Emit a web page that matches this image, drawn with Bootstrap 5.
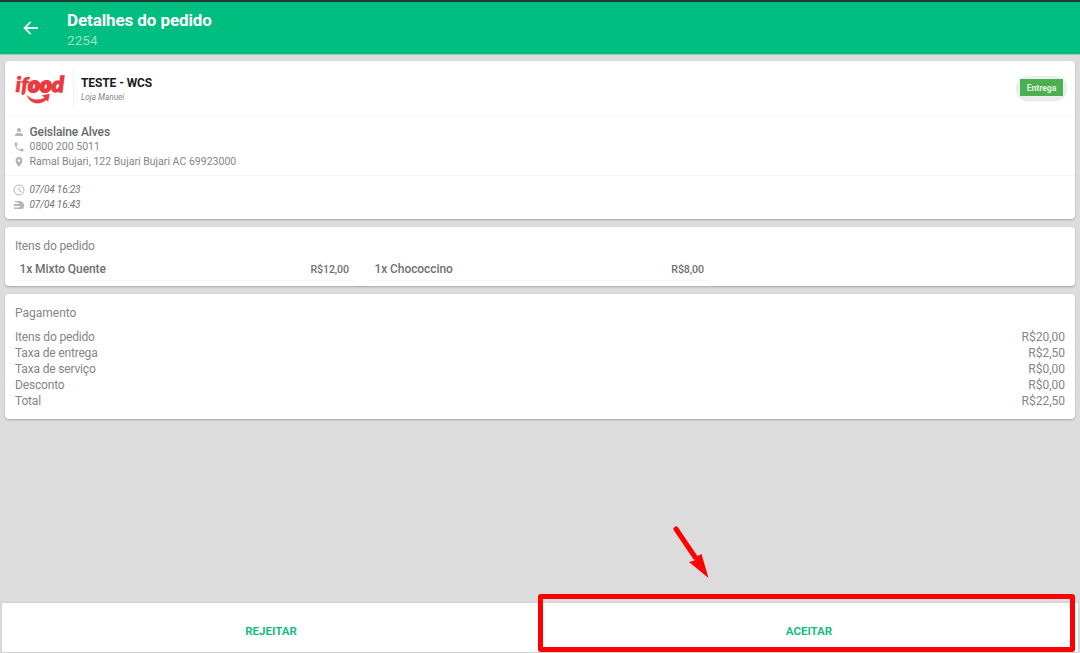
<!DOCTYPE html>
<html lang="pt-BR">
<head>
<meta charset="utf-8">
<meta name="viewport" content="width=device-width, initial-scale=1">
<title>Detalhes do pedido</title>
<link href="https://cdn.jsdelivr.net/npm/bootstrap@5.3.0/dist/css/bootstrap.min.css" rel="stylesheet">
<style>
  body { font-family: Roboto, "Liberation Sans", sans-serif; font-size: 12px; line-height: 16px; color: #858585; background: #dcdcdc; height: 653px; overflow: hidden; }
  .app-bar { height: 55px; background: #00bd80; border-top: 2px solid #1f3b33; border-bottom: 1px solid #8fcdb5; padding-left: 21px; }
  .app-title { font-size: 17px; line-height: 20px; font-weight: 700; color: #fff; margin: 8px 0 0; letter-spacing: -.1px; }
  .app-sub { font-size: 13.5px; line-height: 17px; color: #98e3c9; letter-spacing: .1px; margin-top: 2px; }
  .back { width: 18px; height: 18px; margin: 17px 28px 0 0; }
  .panel { --bs-card-border-radius: 4px; --bs-card-border-width: 0; box-shadow: 0 1px 2px rgba(0,0,0,.25); color: inherit; }
  .order { height: 157.5px; }
  .items { height: 58.5px; padding: 11px 10px 0; }
  .payment { height: 124.5px; padding: 11px 10px 0; }
  .stack { padding: 6px 5px 0; gap: 8.5px; }
  .store { height: 55px; padding: 7px 8px 0 10px; border-bottom: 1px solid #f5f5f5; }
  .logo { width: 50px; height: 40px; }
  .store-name { font-size: 12px; line-height: 14px; font-weight: 700; color: #1b1b1b; letter-spacing: -.1px; }
  .store-text { border-left: 1px solid #f3f3f3; height: 41px; margin-left: 8px; padding: 8px 0 0 7px; }
  .store-sub { font-size: 8.2px; line-height: 15px; font-style: italic; color: #858585; }
  .halo { background: #eceeee; border-radius: 12px; padding: 3px 4px 4px; margin-top: 8px; box-shadow: 0 1px 1px #e3e3e3; }
  .tag { --bs-badge-font-size: 8.5px; --bs-badge-font-weight: 700; --bs-badge-border-radius: 0; width: 43px; height: 17px; line-height: 18px; padding: 0; background: #4caf50; color: #e4f5e4; display: block; }
  .client { height: 60px; padding: 9px 8px 0; border-bottom: 1px solid #f5f5f5; font-size: 10.55px; line-height: 14.6px; }
  .phone, .address { position: relative; top: .5px; }
  .times { padding: 7px 8px 0; font-size: 10px; line-height: 14.5px; font-style: italic; color: #747474; letter-spacing: -.15px; }
  .glyph { width: 12px; height: 12px; margin-right: 4.5px; flex: none; fill: #b5b5b5; }
  .client-name { font-size: 12px; font-weight: 500; color: #686868; letter-spacing: -.1px; }
  .item { width: 339px; height: 19px; margin-right: 16px; padding: 0 5px 0 4.5px; border-bottom: 1px solid #f4f4f4; font-weight: 500; color: #707070; letter-spacing: -.08px; line-height: 15px; }
  .entry { letter-spacing: -.17px; }
  .price { font-size: 10.6px; }
  .actions { height: 49px; margin: 0 2px 1px; box-shadow: 0 0 2px rgba(0,0,0,.12); }
  .action { --bs-btn-color: #14bd83; --bs-btn-bg: #fff; --bs-btn-border-radius: 0; --bs-btn-border-width: 0; --bs-btn-font-size: 11.5px; --bs-btn-font-weight: 700; --bs-btn-padding-y: 0; line-height: 16px; padding-top: 7px; }
  .focus-box { left: 538px; top: 594px; width: 537px; height: 58px; border: 5px solid #f00; border-radius: 3px; pointer-events: none; }
  .pointer { left: 670px; top: 523px; width: 42px; height: 58px; pointer-events: none; }
</style>
</head>
<body class="d-flex flex-column position-relative">
<header class="app-bar d-flex flex-shrink-0">
  <svg class="back" viewBox="0 0 18 18" fill="none" stroke="#e9fff7" stroke-width="1.8"><path d="M17 9H3.5M9.7 2.8 3.5 9l6.2 6.2"/></svg>
  <div><h1 class="app-title">Detalhes do pedido</h1><div class="app-sub">2254</div></div>
</header>
<main class="stack d-flex flex-column flex-grow-1">
  <section class="card panel order">
    <div class="store d-flex">
      <svg class="logo" viewBox="0 0 50 40">
        <text x=".5" y="23.5" font-family="Lato" font-weight="900" font-style="italic" font-size="20" fill="#ea3a40" stroke="#ea3a40" stroke-width=".6" textLength="48.5" lengthAdjust="spacingAndGlyphs">if<tspan stroke-width="2">oo</tspan><tspan stroke-width="1.3">d</tspan></text>
        <path d="M12 27.5C17 32.5 24 33 30 29.500L27 27.500 34.500 26 33 33.500 31.500 31.800C25 37.500 15 36 12 27.500z" fill="#ea3a40" stroke="#ea3a40" stroke-width=".4"/>
      </svg>
      <div class="store-text"><div class="store-name">TESTE - WCS</div><div class="store-sub">Loja Manuei</div></div>
      <div class="ms-auto align-self-start"><div class="halo"><span class="badge tag">Entrega</span></div></div>
    </div>
    <div class="client">
      <div class="d-flex align-items-center client-name"><svg class="glyph" viewBox="0 0 24 24"><path d="M12 12a4 4 0 1 0 0-8 4 4 0 0 0 0 8zm0 2c-2.700 0-8 1.300-8 4v2h16v-2c0-2.700-5.300-4-8-4z"/></svg>Geislaine Alves</div>
      <div class="d-flex align-items-center phone"><svg class="glyph" viewBox="0 0 24 24"><path d="M6.600 10.800c1.400 2.800 3.800 5.100 6.600 6.600l2.200-2.200c.3-.3.7-.4 1-.2 1.100.4 2.300.6 3.600.6.600 0 1 .4 1 1V20c0 .6-.4 1-1 1C10.600 21 3 13.400 3 4c0-.6.500-1 1-1h3.500c.6 0 1 .4 1 1 0 1.200.2 2.400.6 3.600.1.300 0 .7-.2 1z"/></svg>0800 200 5011</div>
      <div class="d-flex align-items-center address"><svg class="glyph" viewBox="0 0 24 24"><path fill-rule="evenodd" d="M12 2a7 7 0 0 0-7 7c0 5.200 7 13 7 13s7-7.800 7-13a7 7 0 0 0-7-7zm0 9.500a2.500 2.500 0 1 1 0-5 2.500 2.500 0 0 1 0 5z"/></svg>Ramal Bujari, 122 Bujari Bujari AC 69923000</div>
    </div>
    <div class="times">
      <div class="d-flex align-items-center"><svg class="glyph" viewBox="0 0 24 24"><path fill="none" stroke="#b5b5b5" stroke-width="2" d="M12 2a10 10 0 1 0 0 20 10 10 0 0 0 0-20zM12 6.500V13l5 3"/></svg>07/04 16:23</div>
      <div class="d-flex align-items-center"><svg class="glyph" viewBox="0 0 24 24"><path d="M4 4h9a9 8 0 0 1 9 8v3q0 5-5 5H5q-3 0-4-3h9q4 0 4-3H1l1-4h9q2-2 0-3H4z"/></svg>07/04 16:43</div>
    </div>
  </section>
  <section class="card panel items">
    <div class="entry">Itens do pedido</div>
    <div class="d-flex mt-2">
      <div class="item d-flex justify-content-between"><span>1x Mixto Quente</span><span class="price">R$12,00</span></div>
      <div class="item d-flex justify-content-between"><span>1x Chococcino</span><span class="price">R$8,00</span></div>
    </div>
  </section>
  <section class="card panel payment">
    <div class="mb-2">Pagamento</div>
    <div class="d-flex justify-content-between"><span class="entry">Itens do pedido</span><span>R$20,00</span></div>
    <div class="d-flex justify-content-between"><span class="entry">Taxa de entrega</span><span>R$2,50</span></div>
    <div class="d-flex justify-content-between"><span class="entry">Taxa de serviço</span><span>R$0,00</span></div>
    <div class="d-flex justify-content-between"><span class="entry">Desconto</span><span>R$0,00</span></div>
    <div class="d-flex justify-content-between"><span class="entry">Total</span><span>R$22,50</span></div>
  </section>
</main>
<footer class="actions d-flex flex-shrink-0">
  <button type="button" class="btn action w-50">REJEITAR</button>
  <button type="button" class="btn action w-50">ACEITAR</button>
</footer>
<div class="focus-box position-absolute"></div>
<svg class="pointer position-absolute" viewBox="0 0 42 58"><path d="M6 6 25 34" stroke="#f00" stroke-width="5" stroke-linecap="round"/><path d="M38.500 55 19 39l5.500-1.500 3-4.500 4-2z" fill="#f00"/></svg>
<script src="https://cdn.jsdelivr.net/npm/bootstrap@5.3.0/dist/js/bootstrap.bundle.min.js"></script>
</body>
</html>
